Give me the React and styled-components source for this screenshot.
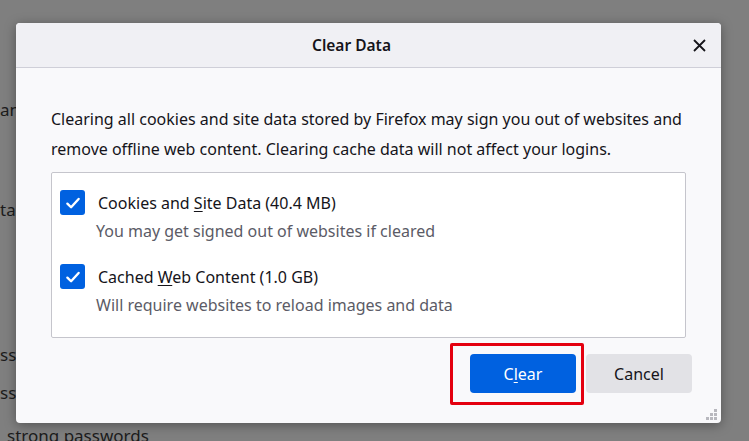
import React from 'react';
import styled, { createGlobalStyle } from 'styled-components';

const GlobalStyle = createGlobalStyle`
  html, body {
    margin: 0;
    padding: 0;
    width: 749px;
    height: 441px;
    overflow: hidden;
    background: #7f7f7f;
    font-family: "Noto Sans", "Open Sans", sans-serif;
  }
`;

const Screen = styled.div`
  position: relative;
  width: 749px;
  height: 441px;
  overflow: hidden;
  background: #7f7f7f;
`;

const BackPage = styled.div`
  display: flex;
  flex-direction: column;
  font-size: 17px;
  color: #1c1c1c;
  line-height: 22px;
`;

const BackLine = styled.div`
  margin-top: ${(p) => p.$top}px;
  margin-left: ${(p) => p.$left}px;
  white-space: nowrap;
`;

const Dialog = styled.div`
  position: absolute;
  left: 16px;
  top: 23px;
  width: 705px;
  height: 400px;
  display: flex;
  flex-direction: column;
  background: #f9f9fb;
  border-radius: 4px;
  box-shadow: 0 2px 12px rgba(0, 0, 0, 0.35);
  color: #15141a;
  overflow: hidden;
`;

const Header = styled.div`
  height: 44px;
  flex-shrink: 0;
  display: flex;
  align-items: center;
  justify-content: center;
  position: relative;
  padding-right: 34px;
  background: #f0f0f4;
  border-bottom: 1px solid #cfcfd8;
`;

const Title = styled.div`
  font-size: 15.5px;
  font-weight: 600;
`;

const CloseButton = styled.button`
  position: absolute;
  right: 15px;
  top: 15px;
  width: 14px;
  height: 14px;
  padding: 0;
  border: none;
  background: none;
  display: flex;
  align-items: center;
  justify-content: center;
`;

const Body = styled.div`
  flex: 1;
  display: flex;
  flex-direction: column;
  padding: 36px 35px 0 35px;
`;

const Intro = styled.p`
  margin: 0;
  font-size: 16px;
  line-height: 30px;
`;

const Group = styled.div`
  margin-top: 8px;
  height: 166px;
  box-sizing: border-box;
  background: #ffffff;
  border: 1px solid #c5c5cc;
  border-radius: 2px;
  padding: 17px 8px 0 8px;
  display: flex;
  flex-direction: column;
  gap: 22px;
`;

const Option = styled.div`
  display: flex;
  flex-direction: column;
`;

const OptionRow = styled.label`
  display: flex;
  align-items: center;
  gap: 13px;
`;

const Box = styled.span`
  width: 25px;
  height: 25px;
  border-radius: 3px;
  background: #0061e0;
  display: flex;
  align-items: center;
  justify-content: center;
  flex-shrink: 0;
`;

const OptionLabel = styled.span`
  font-size: 16px;
  line-height: 22px;
  margin-top: 0;
`;

const OptionHint = styled.span`
  font-size: 16px;
  line-height: 22px;
  color: #5b5b66;
  margin-left: 36px;
  margin-top: 5px;
`;

const Key = styled.span`
  text-decoration: underline;
  text-underline-offset: 2px;
`;

const Footer = styled.div`
  display: flex;
  justify-content: flex-end;
  gap: 10px;
  margin-top: 16px;
  margin-right: -6px;
`;

const Highlight = styled.div`
  position: relative;
  &::after {
    content: '';
    position: absolute;
    left: -20px;
    right: -8px;
    top: -11px;
    bottom: -12px;
    border: 3px solid #e4000f;
    border-radius: 2px;
  }
`;

const Button = styled.button`
  width: 106px;
  height: 39px;
  border: none;
  border-radius: 4px;
  font-family: inherit;
  font-size: 16px;
  padding-top: 1px;
  background: ${(p) => (p.$primary ? '#0061e0' : '#e2e2e6')};
  color: ${(p) => (p.$primary ? '#ffffff' : '#15141a')};
  display: flex;
  align-items: center;
  justify-content: center;
`;

const Grip = styled.svg`
  position: absolute;
  right: 3px;
  bottom: 2px;
`;

const Check = () => (
  <svg width="18" height="18" viewBox="0 0 16 16">
    <path d="M3 8.6 L6.3 11.8 L13 4.4" fill="none" stroke="#fff" strokeWidth="2.1" strokeLinecap="round" strokeLinejoin="round" />
  </svg>
);

export default function App() {
  return (
    <>
      <GlobalStyle />
      <Screen>
        <BackPage>
          <BackLine $top={99} $left={0}>an</BackLine>
          <BackLine $top={78} $left={0}>ta</BackLine>
          <BackLine $top={123} $left={0}>ssw</BackLine>
          <BackLine $top={16} $left={0}>ssw</BackLine>
          <BackLine $top={21} $left={7}>strong passwords</BackLine>
        </BackPage>
        <Dialog>
          <Header>
            <Title>Clear Data</Title>
            <CloseButton aria-label="Close">
              <svg width="13" height="13" viewBox="0 0 13 13">
                <path d="M1 1 L12 12 M12 1 L1 12" stroke="#15141a" strokeWidth="1.8" />
              </svg>
            </CloseButton>
          </Header>
          <Body>
            <Intro>
              Clearing all cookies and site data stored by Firefox may sign you out of websites and
              remove offline web content. Clearing cache data will not affect your logins.
            </Intro>
            <Group>
              <Option>
                <OptionRow>
                  <Box><Check /></Box>
                  <OptionLabel>Cookies and <Key>S</Key>ite Data (40.4 MB)</OptionLabel>
                </OptionRow>
                <OptionHint>You may get signed out of websites if cleared</OptionHint>
              </Option>
              <Option>
                <OptionRow>
                  <Box><Check /></Box>
                  <OptionLabel>Cached <Key>W</Key>eb Content (1.0 GB)</OptionLabel>
                </OptionRow>
                <OptionHint>Will require websites to reload images and data</OptionHint>
              </Option>
            </Group>
            <Footer>
              <Highlight>
                <Button $primary>C<Key>l</Key>ear</Button>
              </Highlight>
              <Button>Cancel</Button>
            </Footer>
          </Body>
          <Grip width="12" height="12" viewBox="0 0 12 12">
            <rect x="8" y="0" width="3" height="3" fill="#b8b8be" />
            <rect x="4" y="4" width="3" height="3" fill="#b8b8be" />
            <rect x="8" y="4" width="3" height="3" fill="#b8b8be" />
            <rect x="0" y="8" width="3" height="3" fill="#b8b8be" />
            <rect x="4" y="8" width="3" height="3" fill="#b8b8be" />
            <rect x="8" y="8" width="3" height="3" fill="#b8b8be" />
          </Grip>
        </Dialog>
      </Screen>
    </>
  );
}
